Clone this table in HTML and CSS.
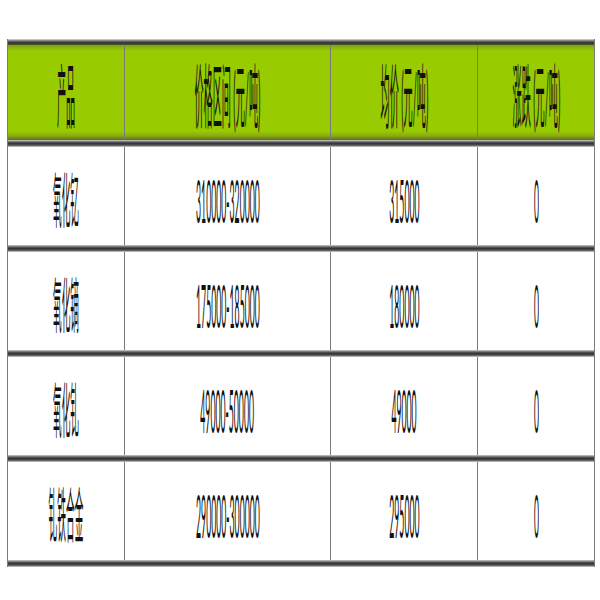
FILE: index.html
```html
<!DOCTYPE html>
<html lang="zh">
<head>
<meta charset="utf-8">
<title>价格表</title>
<link rel="stylesheet" href="styles.css">
</head>
<body>
<div class="table">
  <div class="band band-top"></div>
  <div class="row head">
    <div class="cell"><span class="t">产品</span></div>
    <div class="cell"><span class="t">价格区间 (元/吨)</span></div>
    <div class="cell"><span class="t">均价 (元/吨)</span></div>
    <div class="cell"><span class="t">涨跌 (元/吨)</span></div>
  </div>
  <div class="band"></div>
  <div class="row">
    <div class="cell"><span class="t">氧化钇</span></div>
    <div class="cell"><span class="t">310000-320000</span></div>
    <div class="cell"><span class="t">315000</span></div>
    <div class="cell"><span class="t">0</span></div>
  </div>
  <div class="band"></div>
  <div class="row">
    <div class="cell"><span class="t">氧化镝</span></div>
    <div class="cell"><span class="t">175000-185000</span></div>
    <div class="cell"><span class="t">180000</span></div>
    <div class="cell"><span class="t">0</span></div>
  </div>
  <div class="band"></div>
  <div class="row">
    <div class="cell"><span class="t">氧化钆</span></div>
    <div class="cell"><span class="t">49000-50000</span></div>
    <div class="cell"><span class="t">49000</span></div>
    <div class="cell"><span class="t">0</span></div>
  </div>
  <div class="band"></div>
  <div class="row">
    <div class="cell"><span class="t">钆铁合金</span></div>
    <div class="cell"><span class="t">290000-300000</span></div>
    <div class="cell"><span class="t">295000</span></div>
    <div class="cell"><span class="t">0</span></div>
  </div>
  <div class="band"></div>
</div>
</body>
</html>
```
FILE: styles.css
```css
html, body {
  margin: 0;
  padding: 0;
  background: #ffffff;
}

body {
  font-family: "Lato", "Noto Sans CJK SC", sans-serif;
  font-weight: 400;
  color: #111111;
}

.table {
  margin: 39px 0 0 7px;
  width: 588px;
  box-sizing: border-box;
  border-left: 1px solid #7a7a7a;
  border-right: 1px solid #7a7a7a;
}

.band {
  height: 7px;
  background: linear-gradient(to bottom, #d0d0d0 0%, #5a5a5a 30%, #2e2e2e 55%, #6a6a6a 80%, #d8d8d8 100%);
}

.band-top {
  height: 6px;
  background: linear-gradient(to bottom, #e0e0e0 0%, #8a8a8a 25%, #333333 60%, #4a5a20 100%);
}

.row {
  display: grid;
  grid-template-columns: 117px 206px 147px 116px;
  height: 98px;
}

.row.head {
  height: 95px;
  background: linear-gradient(to bottom, #7f9f18 0px, #99cc00 6px, #99cc00 calc(100% - 9px), #88aa10 calc(100% - 4px), #5f7020 100%);
}

.cell {
  display: flex;
  align-items: center;
  justify-content: center;
  box-sizing: border-box;
  border-right: 1px solid #7a7a7a;
  min-width: 0;
  padding-top: 8px;
}

.cell:last-child {
  border-right: none;
}

.t {
  flex-shrink: 0;
  white-space: nowrap;
  font-size: 60px;
  line-height: 1;
  transform: scaleX(0.145);
  transform-origin: center;
}

.head .cell {
  padding-top: 6px;
}

.head .t {
  font-size: 70px;
  transform: scaleX(0.13);
}
```
